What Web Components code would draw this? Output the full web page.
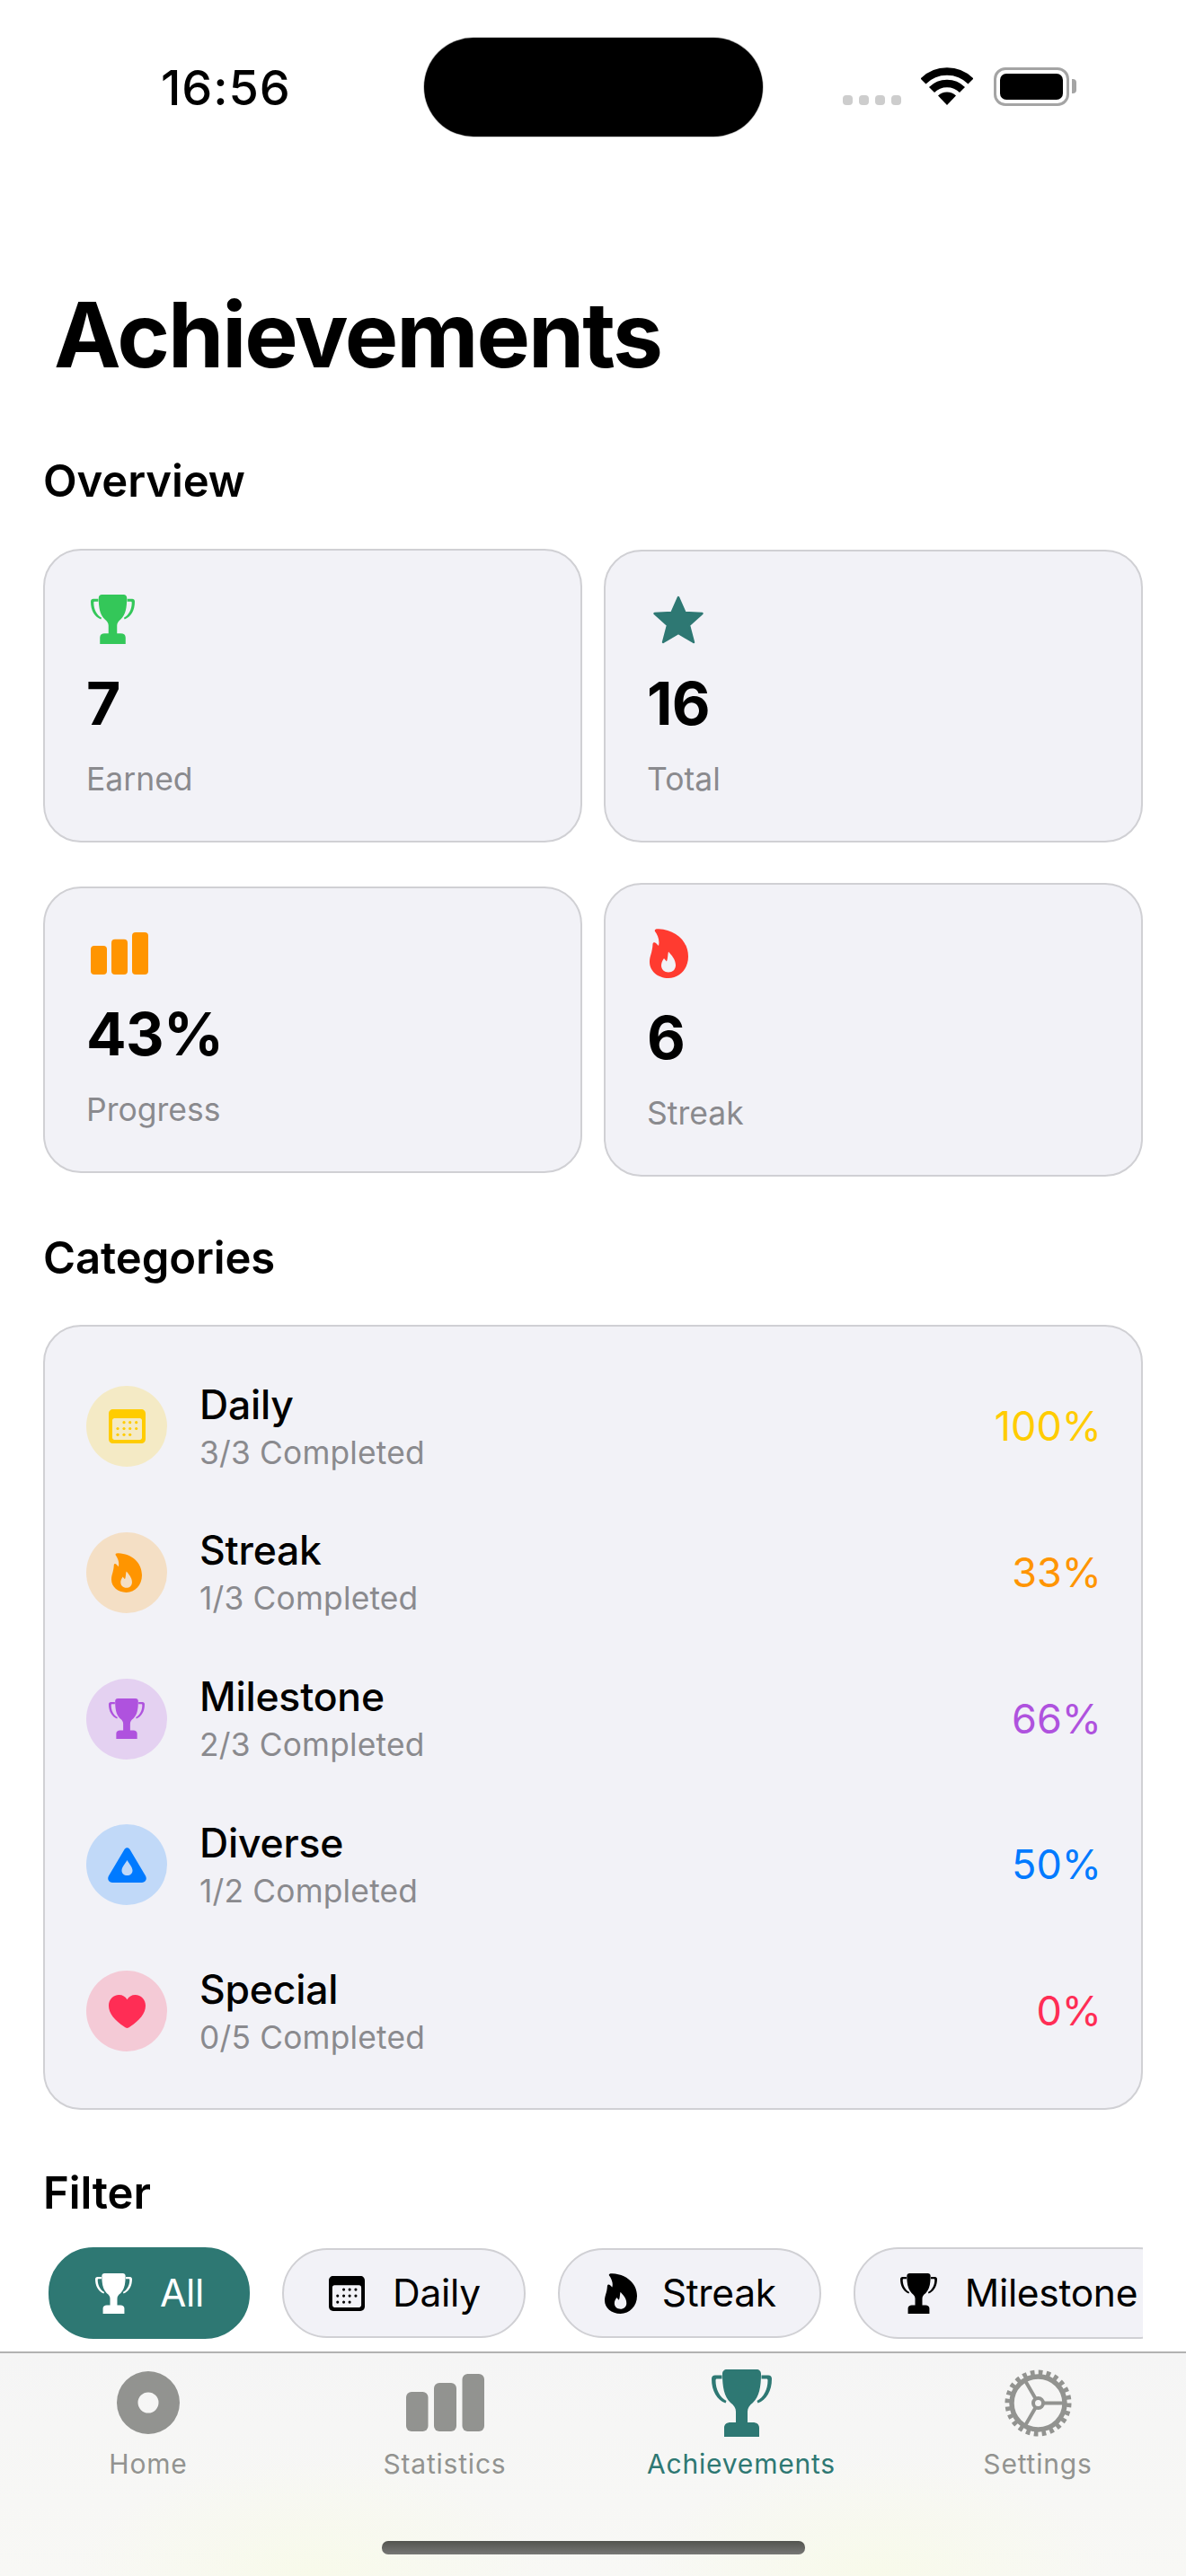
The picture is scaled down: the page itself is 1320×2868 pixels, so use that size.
<!DOCTYPE html>
<html lang="en"><head><meta charset="utf-8"><title>Achievements</title>
<style>
html,body{margin:0;padding:0;background:#fff}
body{font-family:Inter,"Noto Sans",sans-serif;color:#000;-webkit-font-smoothing:antialiased}
</style></head><body>
<app-screen>
  <status-bar slot="status"></status-bar>
  <screen-title>Achievements</screen-title>
  <section-heading style="margin-top:73px">Overview</section-heading>
  <stat-grid>
    <stat-card><app-icon slot="icon" name="trophy" w="49" h="55" color="#34c759" style="margin-left:5px"></app-icon><span slot="value">7</span>Earned</stat-card>
    <stat-card><app-icon slot="icon" name="star" w="56" h="54" color="#2e7873" style="margin-left:7px"></app-icon><span slot="value">16</span>Total</stat-card>
    <stat-card><app-icon slot="icon" name="bars" w="64" h="47" color="#ff9500" style="margin-left:5px"></app-icon><span slot="value">43%</span>Progress</stat-card>
    <stat-card><app-icon slot="icon" name="flame" w="43" h="55" color="#ff3b30" style="margin-left:3px"></app-icon><span slot="value">6</span>Streak</stat-card>
  </stat-grid>
  <section-heading style="margin-top:61px">Categories</section-heading>
  <category-card>
    <category-row tint="rgba(255,204,0,.2)" color="#ffcc00" pct="100%" name="Daily" sub="3/3 Completed"><app-icon name="calendar" w="41" h="38" color="#ffcc00"></app-icon></category-row>
    <category-row tint="rgba(255,149,0,.2)" color="#ff9500" pct="33%" name="Streak" sub="1/3 Completed"><app-icon name="flame" w="34" h="44" color="#ff9500"></app-icon></category-row>
    <category-row tint="rgba(175,82,222,.2)" color="#af52de" pct="66%" name="Milestone" sub="2/3 Completed"><app-icon name="trophy" w="40" h="45" color="#af52de"></app-icon></category-row>
    <category-row tint="rgba(0,122,255,.2)" color="#007aff" pct="50%" name="Diverse" sub="1/2 Completed"><app-icon name="triangle" w="43" h="39" color="#007aff"></app-icon></category-row>
    <category-row tint="rgba(255,45,85,.2)" color="#ff2d55" pct="0%" name="Special" sub="0/5 Completed"><app-icon name="heart" w="41" h="37" color="#ff2d55"></app-icon></category-row>
  </category-card>
  <section-heading style="margin-top:63px">Filter</section-heading>
  <filter-strip>
    <filter-chip active><app-icon slot="icon" name="trophy" w="41" h="45" color="#fff"></app-icon>All</filter-chip>
    <filter-chip><app-icon slot="icon" name="calendar" w="40" h="39" color="#000"></app-icon>Daily</filter-chip>
    <filter-chip><app-icon slot="icon" name="flame" w="36" h="45" color="#000" style="margin-right:-3px"></app-icon>Streak</filter-chip>
    <filter-chip tall><app-icon slot="icon" name="trophy" w="41" h="45" color="#000"></app-icon>Milestone</filter-chip>
  </filter-strip>
  <tab-bar slot="tabs">
    <tab-item><app-icon slot="icon" name="disc" w="70" h="70" color="#929390"></app-icon>Home</tab-item>
    <tab-item><app-icon slot="icon" name="bars3" w="87" h="64" color="#929390"></app-icon>Statistics</tab-item>
    <tab-item active><app-icon slot="icon" name="trophy" w="67" h="75" color="#2e7873"></app-icon>Achievements</tab-item>
    <tab-item><app-icon slot="icon" name="gear" w="75" h="75" color="#929390"></app-icon>Settings</tab-item>
  </tab-bar>
</app-screen>
<script>
const TROPHY='<path d="M17 0H50C53 0 55 2 55 5C55 20 53 30 46 37C42 40 40 43 40 47V59H46C50 59 53 61 53 65V75H14V65C14 61 17 59 21 59H27V47C27 43 25 40 21 37C14 30 12 20 12 5C12 2 14 0 17 0Z"/><path d="M11.5 6.5H4C1.5 6.5 0 8 0 10.5C0 24 6 34 15.5 37.5L16.5 35C9 31 4.5 22 4.5 12.5C4.5 11 5 10.5 6 10.5H11.5Z"/><path d="M55.5 6.5H63C65.5 6.5 67 8 67 10.5C67 24 61 34 51.5 37.5L50.5 35C58 31 62.5 22 62.5 12.5C62.5 11 62 10.5 61 10.5H55.5Z"/>';
const dots=[[17,14.7],[23.7,14.7],[30.7,14.7],[10,21.5],[17,21.5],[23.7,21.5],[30.7,21.5],[10,28.3],[17,28.3],[23.7,28.3]].map(d=>'<circle cx="'+d[0]+'" cy="'+d[1]+'" r="1.6"/>').join('');
const ICONS={
 trophy:['0 0 67 75',TROPHY],
 star:['0 0 56 54','<path d="M28 2 L35.5 19 L54.5 20 L40 33 L45 52 L28 42 L11 52 L16 33 L1.5 20 L20.5 19Z" stroke="currentColor" stroke-width="2.4" stroke-linejoin="round"/>'],
 bars:['0 0 64 47','<rect x="0" y="15" width="18" height="32" rx="4"/><rect x="23" y="7.7" width="18" height="39.3" rx="4"/><rect x="46" y="0" width="18" height="47" rx="4"/>'],
 bars3:['0 0 87 64','<rect x="0" y="20" width="24.5" height="44" rx="6"/><rect x="31" y="10" width="25" height="54" rx="6"/><rect x="62.5" y="0" width="24.5" height="64" rx="6"/>'],
 flame:['0 0 43 55','<path fill-rule="evenodd" d="M6 3C5 1 7 0 10 .3C28 1 43 13 43 31C43 45 33 55 21 55C9 55 0 47 0 37C0 30 3 27 3.5 17C3.7 15 5.5 14.5 7 16L10 19C11.5 13 9 7 6 3ZM21 25.5C20 29 20.5 33 19 36.5C18 35.5 17 34 16 33C14 36 13 38 13 41C13 45.5 16.5 48.5 21 48.5C25.5 48.5 29 45.5 29 40.5C29 34 24 29 21 25.5Z"/>'],
 calendar:['0 0 41 38','<path fill-rule="evenodd" d="M5 0H36C39 0 41 2 41 5V33C41 36 39 38 36 38H5C2 38 0 36 0 33V5C0 2 2 0 5 0ZM6.5 10C5 10 4 11 4 12.5V31.5C4 33 5 34 6.5 34H34.5C36 34 37 33 37 31.5V12.5C37 11 36 10 34.5 10Z"/>'+dots],
 triangle:['0 0 43 39','<path fill-rule="evenodd" d="M18.5 2C20 -.5 23 -.5 24.5 2L42 31.5C44 35 42 39 38 39H5C1 39 -1 35 1 31.5ZM21.5 14C23 17 27.5 21.5 27.5 25.5C27.5 29 25 31 21.5 31C18 31 15.5 29 15.5 25.5C15.5 21.5 20 17 21.5 14Z"/>'],
 heart:['0 0 41 37','<path d="M20.5 37C19.5 37 18.5 36.3 17 35.3C7 28.5 0 21 0 12C0 5 5 0 11.5 0C15.5 0 18.7 2 20.5 5.3C22.3 2 25.5 0 29.5 0C36 0 41 5 41 12C41 21 34 28.5 24 35.3C22.5 36.3 21.5 37 20.5 37Z"/>'],
 disc:['0 0 70 70','<path fill-rule="evenodd" d="M35 0A35 35 0 1 1 35 70A35 35 0 1 1 35 0ZM35 23.5A11.5 11.5 0 1 0 35 46.5A11.5 11.5 0 1 0 35 23.5Z"/>'],
 gear:['0 0 75 75','<g fill="none" stroke="currentColor"><circle cx="37.5" cy="37.5" r="29.5" stroke-width="5.5"/><circle cx="37.5" cy="37.5" r="33.5" stroke-width="7" stroke-dasharray="4.6 4.17"/><circle cx="37.5" cy="37.5" r="5.5" stroke-width="4"/><path stroke-width="4" d="M43 37.5H67M34.7 32.7L22.7 12M34.7 42.3L22.7 63"/></g>'],
 wifi:['0 0 58 42','<g fill="none" stroke="currentColor" stroke-width="8.5"><path d="M2.5 15.5A37.5 37.5 0 0 1 55.5 15.5"/><path d="M12 25A24 24 0 0 1 46 25"/></g><path d="M29 42L19 31.5A14.5 14.5 0 0 1 39 31.5Z"/>']
};
function def(tag,css,html,extra){
  const t=document.createElement('template');
  t.innerHTML='<style>'+css+'</style>'+html;
  customElements.define(tag,class extends HTMLElement{
    constructor(){super();this.attachShadow({mode:'open'}).appendChild(t.content.cloneNode(true));}
    connectedCallback(){if(extra)extra(this,this.shadowRoot);}
  });
}
def('app-icon',':host{display:block;flex:none;line-height:0}svg{display:block}','<svg fill="currentColor"></svg>',(h,r)=>{
  const i=ICONS[h.getAttribute('name')],s=r.querySelector('svg');
  s.setAttribute('viewBox',i[0]);s.setAttribute('width',h.getAttribute('w'));s.setAttribute('height',h.getAttribute('h'));
  s.setAttribute('preserveAspectRatio','none');s.style.color=h.getAttribute('color');s.innerHTML=i[1];
});
def('app-screen',`:host{display:flex;flex-direction:column;width:1320px;height:2868px;overflow:hidden;background:#fff}
 main{flex:1;min-height:0;padding:0 48px;display:flex;flex-direction:column}`,
 '<slot name="status"></slot><main><slot></slot></main><slot name="tabs"></slot>');
def('status-bar',`:host{display:flex;align-items:center;height:170px;box-sizing:border-box;padding:42px 0 18px;position:relative;flex:none}
 .time{font:500 54px/60px Inter,sans-serif;width:143px;margin-left:179px;letter-spacing:.9px;white-space:nowrap;transform:translateY(1px)}
 .island{width:377px;height:110px;border-radius:55px;background:#000;margin-left:150px;box-shadow:0 0 0 .7px #bbb}
 .dots{display:flex;gap:7px;margin-left:89px;align-self:flex-start;margin-top:64px}
 .dots i{width:11px;height:11px;border-radius:4px;background:#cdcdcd}
 .wifi{margin-left:22px;align-self:flex-start;margin-top:33px}
 .bat{margin-left:23px;align-self:flex-start;margin-top:33px;width:84px;height:43px;box-sizing:border-box;border:3px solid #a4a4a4;border-radius:13px;padding:4px;position:relative}
 .bat b{display:block;height:100%;background:#000;border-radius:7px}
 .bat u{position:absolute;right:-11px;top:10px;width:5px;height:16px;background:#a4a4a4;border-radius:0 4px 4px 0}`,
 '<div class="time">16:56</div><div class="island"></div><div class="dots"><i></i><i></i><i></i><i></i></div><app-icon class="wifi" name="wifi" w="58" h="42" color="#000"></app-icon><div class="bat"><b></b><u></u></div>');
def('screen-title',`:host{display:block;font:700 100px/120px Inter,sans-serif;letter-spacing:-2.1px;margin:143px 0 0 12px;flex:none}`,'<slot></slot>');
def('section-heading',`:host{display:block;font:600 49px/60px Inter,sans-serif;letter-spacing:-.1px;flex:none}`,'<slot></slot>');
def('stat-grid',`:host{display:grid;grid-template-columns:600px 600px;column-gap:24px;row-gap:45px;align-items:center;margin-top:45px;flex:none}`,'<slot></slot>');
def('stat-card',`:host{display:flex;flex-direction:column;box-sizing:border-box;padding:49px 46px 47px;background:#f2f2f7;border:2px solid #d0d0d4;border-radius:42px}
 .v{font:700 66px/80px Inter,sans-serif;margin-top:26px;letter-spacing:-.6px}.l{font:400 35.5px/42px Inter,sans-serif;color:#8a8a8e;margin-top:24px}`,
 '<slot name="icon"></slot><div class="v"><slot name="value"></slot></div><div class="l"><slot></slot></div>');
def('category-card',`:host{display:flex;flex-direction:column;gap:61.75px;box-sizing:border-box;height:874px;margin-top:44px;padding:60.5px 44px 57.5px 46px;background:#f2f2f7;border:2px solid #d0d0d4;border-radius:42px;flex:none}`,'<slot></slot>');
def('category-row',`:host{display:flex;align-items:center;height:101px}
 .c{width:90px;height:90px;border-radius:50%;display:flex;align-items:center;justify-content:center;flex:none}
 .t{flex:1;margin-left:36px}.n{font:450 44.5px/52px Inter,sans-serif;letter-spacing:-.2px}.s{font:400 35.3px/42px Inter,sans-serif;color:#8a8a8e;margin-top:7px;letter-spacing:.2px}
 .p{font:400 45px/52px Inter,sans-serif}`,
 '<div class="c"><slot></slot></div><div class="t"><div class="n"></div><div class="s"></div></div><div class="p"></div>',
 (h,r)=>{r.querySelector('.c').style.background=h.getAttribute('tint');r.querySelector('.n').textContent=h.getAttribute('name');r.querySelector('.s').textContent=h.getAttribute('sub');const p=r.querySelector('.p');p.textContent=h.getAttribute('pct');p.style.color=h.getAttribute('color');});
def('filter-strip',`:host{display:flex;align-items:center;gap:36px;margin-top:30px;padding-left:6px;height:102px;overflow:hidden;flex:none}`,'<slot></slot>');
def('filter-chip',`:host{display:inline-flex;align-items:center;gap:31px;box-sizing:border-box;height:100px;padding:0 48px 0 50px;background:#f2f2f7;border:2px solid #d0d0d4;border-radius:50px;font:400 42.5px/52px Inter,sans-serif;letter-spacing:-.3px;color:#000;flex:none;white-space:nowrap}
 :host([tall]){height:102px}
 :host([active]){height:102px;background:#2e7873;border-color:#2e7873;color:#fff;padding-right:49px}`,'<slot name="icon"></slot><slot></slot>');
def('tab-bar',`:host{display:block;height:250px;box-sizing:border-box;border-top:2px solid #b2b2b2;flex:none;padding-top:17px;
  background:radial-gradient(260px 130px at 347px 100%,#f8faea,transparent),radial-gradient(260px 130px at 975px 100%,#f8faea,transparent),linear-gradient(#f5f5f5,#f8f8f5);position:relative}
 .row{display:grid;grid-template-columns:repeat(4,330px)}
 .ind{position:absolute;left:425px;bottom:24px;width:471px;height:15px;border-radius:7px;background:linear-gradient(#53544f,#777775)}`,
 '<div class="row"><slot></slot></div><div class="ind"></div>');
def('tab-item',`:host{display:flex;flex-direction:column;align-items:center;color:#929390;font:400 30px/36px Inter,sans-serif;letter-spacing:.8px}
 :host([active]){color:#2e7873}.i{height:76px;display:flex;align-items:center;justify-content:center;margin-bottom:12px}`,
 '<div class="i"><slot name="icon"></slot></div><slot></slot>');
</script>
</body></html>
